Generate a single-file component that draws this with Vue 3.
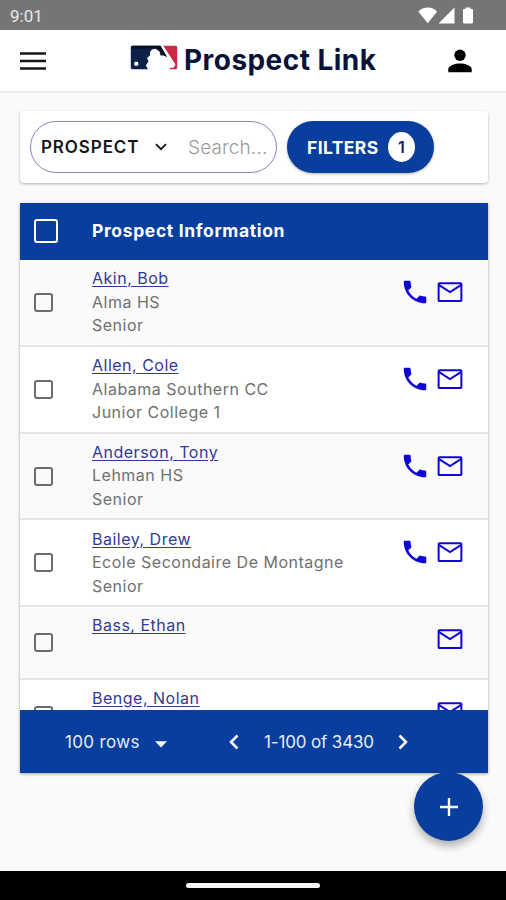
<script setup>
const prospects = [
  { name: 'Akin, Bob', school: 'Alma HS', level: 'Senior', phone: true },
  { name: 'Allen, Cole', school: 'Alabama Southern CC', level: 'Junior College 1', phone: true },
  { name: 'Anderson, Tony', school: 'Lehman HS', level: 'Senior', phone: true },
  { name: 'Bailey, Drew', school: 'Ecole Secondaire De Montagne', level: 'Senior', phone: true },
  { name: 'Bass, Ethan', phone: false },
  { name: 'Benge, Nolan', phone: false },
]
</script>

<template>
  <div class="screen">
    <div class="status">
      <span class="time">9:01</span>
      <svg class="status-icons" width="56" height="18" viewBox="0 0 56 18" fill="#fff">
        <path d="M0.4 4.8C5 -.8 14.6 -.8 19 4.8L9.7 16.200Z" />
        <path d="M20.500 16.500L36.500.5V16.500Z" />
        <path d="M47.500 .5h5v1.500h1.500q1 0 1 1V15.500q0 1-1 1h-8q-1 0-1-1V3q0-1 1-1h1.500Z" />
      </svg>
    </div>

    <header class="topbar">
      <svg class="menu" width="26" height="20" viewBox="0 0 26 20">
        <path d="M0 2.500h26M0 10h26M0 17.500h26" stroke="#161616" stroke-width="2.300" />
      </svg>
      <div class="brand">
        <svg class="logo" width="48" height="26" viewBox="0 0 48 26">
          <path d="M2.500 .8H30.500L37 12L33.500 10.500L30.500 10.500L29.500 6.500L25.500 3.800L22 4.500L20 7L20 10.500L17 13L18.500 16.500L15.800 20.500L18 24.300H2.500Q.8 24.300.8 22.600V2.500Q.8.8 2.500.8Z" fill="#0b2149" />
          <path d="M2.500 .8H30.500L37 12L32.500 9L29.500 5L25.500 3L20 3.500H1Q.8.8 2.500.8Z" fill="#090d18" />
          <rect x="4.300" y="16.800" width="4" height="4" rx="1.300" fill="#fff" />
          <path d="M33.300 .8H45.500Q47.200.8 47.200 2.500V22.600Q47.200 24.300 45.500 24.300H39.500L40.500 22.700H43.500L45.500 19.500Z" fill="#c92942" />
        </svg>
        <span class="brand-name">Prospect Link</span>
      </div>
      <svg class="person" width="24" height="24" viewBox="0 0 24 24">
        <circle cx="12" cy="6.300" r="5.700" />
        <path d="M.3 23.300V20.300C.3 16.500 7.500 14.600 12 14.600S23.700 16.500 23.700 20.300V23.300Z" />
      </svg>
    </header>

    <main class="content">
      <section class="tools">
        <div class="search">
          <span class="kind">PROSPECT</span>
          <svg class="chevron" width="12" height="8" viewBox="0 0 12 8" fill="none" stroke="#161616" stroke-width="1.900">
            <path d="M1 1.200L6 6.200L11 1.200" />
          </svg>
          <span class="placeholder">Search...</span>
        </div>
        <button class="filters"><span class="filters-label">FILTERS</span><span class="count">1</span></button>
      </section>

      <section class="table">
        <div class="thead">
          <span class="check check-all"></span>
          <span class="title">Prospect Information</span>
        </div>
        <div class="rows">
          <div v-for="p in prospects" :key="p.name" class="row">
            <span class="check"></span>
            <div class="info">
              <a class="name">{{ p.name }}</a>
              <span v-if="p.school">{{ p.school }}</span>
              <span v-if="p.level">{{ p.level }}</span>
            </div>
            <div class="actions">
              <svg v-if="p.phone" width="30" height="30" viewBox="0 0 24 24">
                <path d="M6.620 10.790c1.440 2.830 3.760 5.140 6.590 6.590l2.200-2.200c.27-.27.67-.36 1.020-.24 1.120.37 2.330.57 3.570.57.55 0 1 .45 1 1V20c0 .55-.45 1-1 1-9.390 0-17-7.610-17-17 0-.55.45-1 1-1h3.500c.55 0 1 .45 1 1 0 1.250.2 2.450.57 3.570.11.35.03.74-.25 1.020l-2.200 2.200z" />
              </svg>
              <svg width="30" height="30" viewBox="0 0 24 24" class="mail">
                <rect x="2.900" y="4.900" width="18.200" height="14.300" rx=".7" />
                <path d="M3 6.300L12 12L21 6.300" />
              </svg>
            </div>
          </div>
        </div>
        <div class="pager">
          <span class="per-page">100 rows</span>
          <svg class="drop" width="12" height="7" viewBox="0 0 12 7"><path d="M0 .3H12L6 6.500Z" fill="#fff" /></svg>
          <svg class="prev" width="10" height="16" viewBox="0 0 10 16" fill="none" stroke="#fff" stroke-width="2.500"><path d="M8.500 1.500L2 8L8.500 14.500" /></svg>
          <span class="range">1-100 of 3430</span>
          <svg class="next" width="10" height="16" viewBox="0 0 10 16" fill="none" stroke="#fff" stroke-width="2.500"><path d="M1.500 1.500L8 8L1.500 14.500" /></svg>
        </div>
      </section>
      <button class="fab">
        <svg width="18" height="18" viewBox="0 0 18 18"><path d="M9 0V18M0 9H18" stroke="#fff" stroke-width="2.400" /></svg>
      </button>
    </main>

    <div class="navbar"><span class="handle"></span></div>
  </div>
</template>

<style>
body { margin: 0; }
</style>

<style scoped>
* { box-sizing: border-box; }
svg { display: block; flex: none; }
span, a { white-space: nowrap; }
.screen { width: 506px; height: 900px; display: flex; flex-direction: column; background: #fafafa; font-family: Inter, "Liberation Sans", sans-serif; overflow: hidden; }
.status { flex: none; height: 30px; background: #757575; display: flex; justify-content: space-between; padding: 7px 32px 0 10px; }
.time { font: 400 17px/19px Roboto, sans-serif; color: #e8e8e8; }
.topbar { flex: none; height: 63px; background: #fff; border-bottom: 2px solid #ededed; display: flex; align-items: flex-start; padding-left: 20px; }
.menu { margin-top: 21px; }
.brand { display: flex; margin-left: 84px; }
.logo { margin-top: 15px; }
.brand-name { margin-left: 6px; margin-top: 12px; font-size: 28px; line-height: 36px; font-weight: 700; color: #0b1238; width: 193px; letter-spacing: .45px; }
.person { margin-left: 71px; margin-top: 19px; }
.content { flex: none; height: 778px; padding: 18px 18px 0 20px; display: flex; flex-direction: column; }
.tools { flex: none; height: 72px; background: #fff; border-radius: 4px; box-shadow: 0 1px 3px rgba(0,0,0,.28); display: flex; align-items: center; padding-left: 10px; }
.search { width: 247px; height: 52px; border: 1px solid #8587bd; border-radius: 26px; display: flex; align-items: center; padding-left: 10px; }
.kind { font-size: 17px; font-weight: 600; color: #161616; letter-spacing: .9px; width: 114px; }
.placeholder { margin-left: 21px; font-size: 19px; font-weight: 300; color: #9a9a9a; letter-spacing: .15px; }
.filters { margin-left: 10px; width: 147px; height: 52px; border: 0; border-radius: 26px; background: #083e9e; color: #fff; display: flex; align-items: center; padding: 0 0 0 20px; font-family: inherit; box-shadow: 0 1px 3px rgba(0,0,0,.3); }
.filters-label { width: 81px; text-align: left; font-size: 17.500px; font-weight: 700; letter-spacing: .4px; }
.count { width: 27px; height: 30px; border-radius: 50%; background: #fff; color: #101a70; font-size: 16px; line-height: 30px; font-weight: 600; text-align: center; }
.table { flex: none; margin-top: 20px; height: 570px; background: #fff; display: flex; flex-direction: column; box-shadow: 0 1px 3px rgba(0,0,0,.35); }
.thead { flex: none; height: 57px; background: #083e9e; display: flex; align-items: center; padding: 0 0 2px 14px; }
.check { flex: none; width: 19px; height: 19px; border: 2px solid #6c6c6c; border-radius: 3px; }
.check-all { width: 24px; height: 24px; border-color: #fff; border-width: 2.500px; }
.title { margin-left: 34px; font-size: 17.500px; font-weight: 700; color: #fff; letter-spacing: .65px; }
.rows { flex: 1; min-height: 0; overflow: hidden; }
.row { min-height: 72.800px; display: flex; align-items: center; padding: 7.300px 23px 6.700px 14px; border-bottom: 2px solid #e5e5e5; background: #fff; }
.row:nth-child(odd) { background: #fafafa; }
.info { margin-left: 39px; flex: 1; align-self: flex-start; display: flex; flex-direction: column; align-items: flex-start; font-size: 16px; line-height: 23.600px; color: #707070; letter-spacing: .5px; font-weight: 400; }
.name { color: #303a98; text-decoration: underline; text-underline-offset: 2px; }
.actions { align-self: flex-start; display: flex; gap: 5px; padding-top: 9.700px; fill: #1005d8; }
.mail { fill: none; stroke: #1005d8; stroke-width: 1.600; }
.pager { flex: none; height: 63px; background: #083e9e; color: #e7ecf8; display: flex; align-items: center; padding-left: 45px; font-size: 17px; }
.per-page { width: 75px; letter-spacing: .35px; }
.drop { margin: 5px 0 0 15px; }
.prev { margin-left: 62px; }
.range { margin-left: 25px; width: 111px; letter-spacing: -.15px; }
.next { margin-left: 23px; }
.fab { flex: none; align-self: flex-end; margin: -1px 5px 0 0; width: 69px; height: 69px; border: 0; border-radius: 50%; padding: 0; background: #083e9e; display: flex; align-items: center; justify-content: center; box-shadow: 0 5px 9px rgba(0,0,0,.3); clip-path: inset(0 -20px -24px -20px); }
.navbar { flex: none; height: 29px; background: #000; display: flex; justify-content: center; padding-top: 12px; }
.handle { width: 134px; height: 5px; border-radius: 3px; background: #f5f5f5; }
</style>
